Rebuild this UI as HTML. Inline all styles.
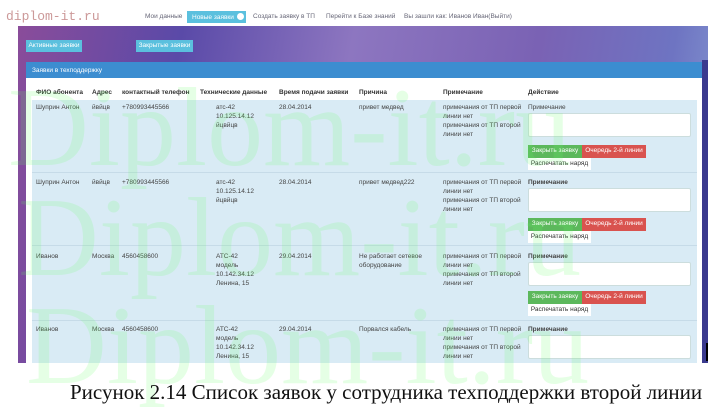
<!DOCTYPE html>
<html><head><meta charset="utf-8"><style>
body{margin:0;width:722px;height:418px;background:#fff;position:relative;overflow:hidden;font-family:"Liberation Sans",sans-serif;}
.a{position:absolute;}
.t{font-size:6.5px;color:#444;white-space:nowrap;line-height:9px}
.btn{position:absolute;font-size:6.5px;color:#fff;line-height:12px;text-align:center}
.ta{position:absolute;background:#fff;border:1px solid #cdd;border-radius:2px}
.wm{position:absolute;font-family:"Liberation Serif",serif;font-size:112px;color:#6f6;opacity:.16;white-space:nowrap;line-height:1}
</style></head><body>
<div class="a" style="left:6px;top:9px;font-family:'Liberation Mono',monospace;font-size:13px;color:#c99">diplom-it.ru</div>
<div class="a t" style="left:145px;top:12px;color:#667">Мои данные</div>
<div class="a" style="left:187px;top:11px;width:59px;height:12px;background:#5bc0de"></div>
<div class="a t" style="left:192px;top:13px;color:#fff">Новые заявки</div>
<div class="a" style="left:237px;top:13px;width:7px;height:7px;border-radius:50%;background:#fff"></div>
<div class="a t" style="left:253px;top:12px;color:#667">Создать заявку в ТП</div>
<div class="a t" style="left:326px;top:12px;color:#667">Перейти к Базе знаний</div>
<div class="a t" style="left:404px;top:12px;color:#667">Вы зашли как: Иванов Иван(Выйти)</div>
<div class="a" style="left:18px;top:26px;width:690px;height:337px;background:linear-gradient(100deg,#8a4c9a 0%,#5a4aa8 22%,#8d76c0 45%,#7a62b4 70%,#6e74c2 88%,#8aa0d4 100%)"></div>
<div class="a" style="left:702px;top:60px;width:6px;height:303px;background:#3b3a8e"></div>
<div class="btn" style="left:26px;top:40px;width:56px;height:12px;background:#5bc0de">Активные заявки</div>
<div class="btn" style="left:136px;top:40px;width:57px;height:12px;background:#5bc0de">Закрытые заявки</div>
<div class="a" style="left:26px;top:62px;width:676px;height:16px;background:#3c8dd0"></div>
<div class="a t" style="left:32px;top:66px;color:#fff">Заявки в техподдержку</div>
<div class="a" style="left:26px;top:78px;width:676px;height:285px;background:#fff"></div>
<div class="a" style="left:32px;top:100px;width:665px;height:263px;background:#d9ebf5"></div>
<div class="a" style="left:32px;top:172px;width:665px;height:1px;background:#c6dbe8"></div>
<div class="a" style="left:32px;top:245px;width:665px;height:1px;background:#c6dbe8"></div>
<div class="a" style="left:32px;top:320px;width:665px;height:1px;background:#c6dbe8"></div>
<div class="a" style="left:706px;top:343px;width:2px;height:18px;background:#000"></div>
<div class="a t" style="top:88px;left:36px;font-weight:bold;color:#333">ФИО абонента</div>
<div class="a t" style="top:88px;left:92px;font-weight:bold;color:#333">Адрес</div>
<div class="a t" style="top:88px;left:122px;font-weight:bold;color:#333">контактный телефон</div>
<div class="a t" style="top:88px;left:200px;font-weight:bold;color:#333">Технические данные</div>
<div class="a t" style="top:88px;left:279px;font-weight:bold;color:#333">Время подачи заявки</div>
<div class="a t" style="top:88px;left:359px;font-weight:bold;color:#333">Причина</div>
<div class="a t" style="top:88px;left:443px;font-weight:bold;color:#333">Примечание</div>
<div class="a t" style="top:88px;left:528px;font-weight:bold;color:#333">Действие</div>

<div class="a t" style="top:103px;left:36px">Шуприн Антон</div><div class="a t" style="top:103px;left:92px">йвйцв</div><div class="a t" style="top:103px;left:122px">+780993445566</div>
<div class="a t" style="top:103px;left:216px">атс-42<br>10.125.14.12<br>йцвйцв</div><div class="a t" style="top:103px;left:279px">28.04.2014</div><div class="a t" style="top:103px;left:359px">привет медвед</div>
<div class="a t" style="top:103px;left:443px">примечания от ТП первой<br>линии нет<br>примечания от ТП второй<br>линии нет</div>
<div class="a t" style="top:103px;left:528px">Примечание</div>
<div class="ta" style="left:528px;top:113px;width:161px;height:22px"></div>
<div class="btn" style="left:528px;top:145px;width:54px;height:13px;background:#5cb85c">Закрыть заявку</div>
<div class="btn" style="left:582px;top:145px;width:64px;height:13px;background:#d9534f">Очередь 2-й линии</div>
<div class="btn" style="left:528px;top:158px;width:63px;height:12px;background:#fff;color:#333">Распечатать наряд</div>

<div class="a t" style="top:178px;left:36px">Шуприн Антон</div><div class="a t" style="top:178px;left:92px">йвйцв</div><div class="a t" style="top:178px;left:122px">+780993445566</div>
<div class="a t" style="top:178px;left:216px">атс-42<br>10.125.14.12<br>йцвйцв</div><div class="a t" style="top:178px;left:279px">28.04.2014</div><div class="a t" style="top:178px;left:359px">привет медвед222</div>
<div class="a t" style="top:178px;left:443px">примечания от ТП первой<br>линии нет<br>примечания от ТП второй<br>линии нет</div>
<div class="a t" style="top:178px;left:528px;font-weight:bold">Примечание</div>
<div class="ta" style="left:528px;top:188px;width:161px;height:22px"></div>
<div class="btn" style="left:528px;top:218px;width:54px;height:13px;background:#5cb85c">Закрыть заявку</div>
<div class="btn" style="left:582px;top:218px;width:64px;height:13px;background:#d9534f">Очередь 2-й линии</div>
<div class="btn" style="left:528px;top:231px;width:63px;height:12px;background:#fff;color:#333">Распечатать наряд</div>

<div class="a t" style="top:252px;left:36px">Иванов</div><div class="a t" style="top:252px;left:92px">Москва</div><div class="a t" style="top:252px;left:122px">4560458600</div>
<div class="a t" style="top:252px;left:216px">АТС-42<br>модель<br>10.142.34.12<br>Ленина, 15</div><div class="a t" style="top:252px;left:279px">29.04.2014</div><div class="a t" style="top:252px;left:359px">Не работает сетевое<br>оборудование</div>
<div class="a t" style="top:252px;left:443px">примечания от ТП первой<br>линии нет<br>примечания от ТП второй<br>линии нет</div>
<div class="a t" style="top:252px;left:528px;font-weight:bold">Примечание</div>
<div class="ta" style="left:528px;top:262px;width:161px;height:22px"></div>
<div class="btn" style="left:528px;top:291px;width:54px;height:13px;background:#5cb85c">Закрыть заявку</div>
<div class="btn" style="left:582px;top:291px;width:64px;height:13px;background:#d9534f">Очередь 2-й линии</div>
<div class="btn" style="left:528px;top:304px;width:63px;height:12px;background:#fff;color:#333">Распечатать наряд</div>

<div class="a t" style="top:325px;left:36px">Иванов</div><div class="a t" style="top:325px;left:92px">Москва</div><div class="a t" style="top:325px;left:122px">4560458600</div>
<div class="a t" style="top:325px;left:216px">АТС-42<br>модель<br>10.142.34.12<br>Ленина, 15</div><div class="a t" style="top:325px;left:279px">29.04.2014</div><div class="a t" style="top:325px;left:359px">Порвался кабель</div>
<div class="a t" style="top:325px;left:443px">примечания от ТП первой<br>линии нет<br>примечания от ТП второй<br>линии нет</div>
<div class="a t" style="top:325px;left:528px;font-weight:bold">Примечание</div>
<div class="ta" style="left:528px;top:335px;width:161px;height:22px"></div>

<div class="wm" style="left:8px;top:72px">Diplom-it.ru</div>
<div class="wm" style="left:18px;top:182px">Diplom-it.ru</div>
<div class="wm" style="left:26px;top:290px">Diplom-it.ru</div>

<div class="a" style="left:70px;top:380px;font-family:'Liberation Serif',serif;font-size:21px;color:#111;white-space:nowrap">Рисунок 2.14 Список заявок у сотрудника техподдержки второй линии</div>
</body></html>
